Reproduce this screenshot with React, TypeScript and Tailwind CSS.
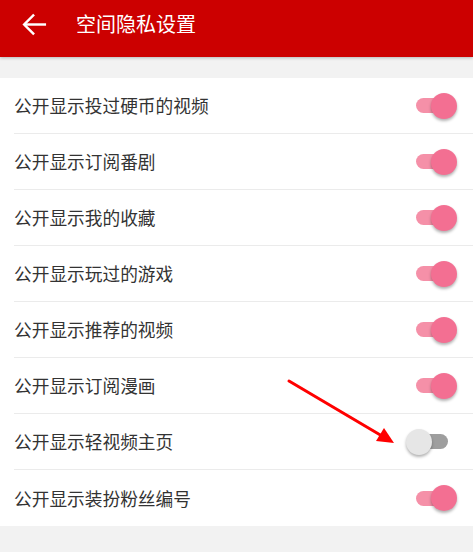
import React from 'react';

const items = [
  { label: '公开显示投过硬币的视频', on: true },
  { label: '公开显示订阅番剧', on: true },
  { label: '公开显示我的收藏', on: true },
  { label: '公开显示玩过的游戏', on: true },
  { label: '公开显示推荐的视频', on: true },
  { label: '公开显示订阅漫画', on: true },
  { label: '公开显示轻视频主页', on: false },
  { label: '公开显示装扮粉丝编号', on: true },
];

const Toggle = ({ on }: { on: boolean }) => (
  <div className="relative w-[32px] h-[15px] mr-[25px]">
    <div className={`absolute inset-0 rounded-full ${on ? 'bg-[#f590a8]' : 'bg-[#9e9e9e]'}`}></div>
    <div
      className={`absolute top-1/2 -translate-y-1/2 w-[26px] h-[26px] rounded-full shadow-[0_2px_3px_rgba(0,0,0,0.3)] ${
        on ? 'left-[15px] bg-[#f36f92]' : 'left-[-10px] bg-[#e6e6e6]'
      }`}
    ></div>
  </div>
);

export default function App() {
  return (
    <div
      className="relative w-[473px] h-[552px] bg-[#f2f2f2] overflow-hidden"
      style={{ fontFamily: '"Noto Sans CJK SC", "Noto Sans", sans-serif' }}
    >
      {/* Header */}
      <div className="h-[57px] pb-[9px] bg-[#cc0000] flex items-center shadow-[0_1px_3px_rgba(0,0,0,0.25)] relative z-10">
        <svg className="ml-[19px]" width="31" height="31" viewBox="0 0 24 24" fill="none" stroke="white" strokeWidth="1.9" strokeLinecap="square">
          <path d="M20 12H5" />
          <path d="M11 5l-7 7 7 7" />
        </svg>
        <span className="ml-[26px] text-white text-[20px]">空间隐私设置</span>
      </div>

      {/* List */}
      <div className="mt-[21px] bg-white">
        {items.map((item, index) => (
          <div key={index} className="pl-[14px]">
            <div
              className={`h-[56px] flex items-center justify-between ${
                index < items.length - 1 ? 'border-b border-[#ebebeb]' : ''
              }`}
            >
              <span className="text-[17.7px] text-[#333333]">{item.label}</span>
              <Toggle on={item.on} />
            </div>
          </div>
        ))}
      </div>

      {/* Annotation arrow */}
      <svg className="absolute left-0 top-0 pointer-events-none" width="473" height="552">
        <line x1="289" y1="381" x2="382" y2="436" stroke="#ff0000" strokeWidth="3" strokeLinecap="round" />
        <polygon points="394,443 376,441 384,428" fill="#ff0000" />
      </svg>
    </div>
  );
}
